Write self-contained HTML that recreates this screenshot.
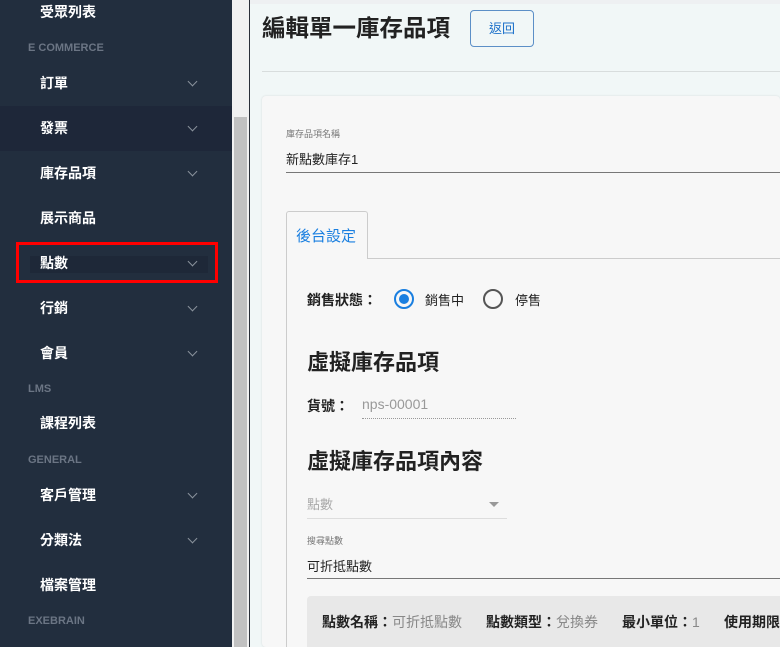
<!DOCTYPE html>
<html><head><meta charset="utf-8"><style>
*{margin:0;padding:0;box-sizing:border-box}
body{width:780px;height:647px;overflow:hidden;position:relative;background:#f1f7f7;font-family:"Liberation Sans","Noto Sans CJK TC",sans-serif}
.sb{position:absolute;left:0;top:0;width:232px;height:647px;background:#222e3e}
.it{position:absolute;left:40px;color:#fff;font-size:14px;font-weight:bold;line-height:20px}
.hd{position:absolute;left:28px;color:#6b7584;font-size:11px;font-weight:bold;line-height:14px}
.ch{position:absolute;left:189px;width:7px;height:7px;border-right:1.3px solid #8a929c;border-bottom:1.3px solid #8a929c;transform:rotate(45deg)}
.abs{position:absolute}
.bt{position:absolute;top:612px;font-size:14px;color:#222;white-space:nowrap}
.bt span{color:#888;font-weight:normal}
</style></head><body>
<div class="sb">
<div class="abs" style="left:0;top:106px;width:232px;height:45px;background:#1e2739"></div>
<div class="it" style="top:2px">受眾列表</div>
<div class="hd" style="top:41px">E COMMERCE</div>
<div class="it" style="top:73px">訂單</div><div class="ch" style="top:78px"></div>
<div class="it" style="top:118px">發票</div><div class="ch" style="top:123px"></div>
<div class="it" style="top:163px">庫存品項</div><div class="ch" style="top:168px"></div>
<div class="it" style="top:208px">展示商品</div>
<div class="abs" style="left:30px;top:256px;width:178px;height:17px;background:#1e2838"></div>
<div class="it" style="top:253px">點數</div><div class="ch" style="top:258px"></div>
<div class="abs" style="left:16px;top:242px;width:202px;height:41px;border:3px solid #f00"></div>
<div class="it" style="top:298px">行銷</div><div class="ch" style="top:303px"></div>
<div class="it" style="top:343px">會員</div><div class="ch" style="top:348px"></div>
<div class="hd" style="top:382px">LMS</div>
<div class="it" style="top:413px">課程列表</div>
<div class="hd" style="top:453px">GENERAL</div>
<div class="it" style="top:485px">客戶管理</div><div class="ch" style="top:490px"></div>
<div class="it" style="top:530px">分類法</div><div class="ch" style="top:535px"></div>
<div class="it" style="top:575px">檔案管理</div>
<div class="hd" style="top:614px">EXEBRAIN</div>
</div>
<div class="abs" style="left:232px;top:0;width:17px;height:647px;background:#f1f1f1"></div>
<div class="abs" style="left:234px;top:117px;width:13px;height:530px;background:#c1c1c1"></div>
<div class="abs" style="left:249px;top:0;width:1px;height:647px;background:#2a2f38"></div>
<div class="abs" style="left:250px;top:0;width:530px;height:4px;background:#eef0f2"></div>
<div class="abs" style="left:262px;top:12px;font-size:23.5px;font-weight:bold;color:#222;line-height:32px;white-space:nowrap">編輯單一庫存品項</div>
<div class="abs" style="left:470px;top:10px;width:64px;height:37px;border:1px solid #5c8fc7;border-radius:4px;color:#1a6fc9;font-size:13px;text-align:center;line-height:35px">返回</div>
<div class="abs" style="left:262px;top:71px;width:518px;height:1px;background:#d8dddd"></div>
<div class="abs" style="left:262px;top:96px;width:518px;height:551px;background:#f7f7f7;border-radius:4px;box-shadow:0 0 2px rgba(0,0,0,.12)"></div>
<div class="abs" style="left:286px;top:127px;font-size:9px;color:#777">庫存品項名稱</div>
<div class="abs" style="left:286px;top:149px;font-size:13px;color:#222">新點數庫存1</div>
<div class="abs" style="left:286px;top:172px;width:494px;height:1px;background:#777"></div>
<div class="abs" style="left:286px;top:211px;width:82px;height:48px;border:1px solid #ccc;border-bottom:none;background:#f7f7f7;border-radius:3px 3px 0 0;z-index:2"></div>
<div class="abs" style="left:296px;top:225px;font-size:15px;color:#1a7fe0;z-index:3">後台設定</div>
<div class="abs" style="left:367px;top:258px;width:413px;height:1px;background:#ccc"></div>
<div class="abs" style="left:286px;top:258px;width:1px;height:389px;background:#ccc"></div>
<div class="abs" style="left:307px;top:290px;font-size:14px;font-weight:bold;color:#222">銷售狀態：</div>
<div class="abs" style="left:394px;top:289px;width:20px;height:20px;border:2px solid #1a7fe0;border-radius:50%"></div>
<div class="abs" style="left:399px;top:294px;width:10px;height:10px;background:#1a7fe0;border-radius:50%"></div>
<div class="abs" style="left:425px;top:290px;font-size:13px;color:#222">銷售中</div>
<div class="abs" style="left:483px;top:289px;width:20px;height:20px;border:2px solid #555;border-radius:50%"></div>
<div class="abs" style="left:515px;top:290px;font-size:13px;color:#222">停售</div>
<div class="abs" style="left:307px;top:345px;font-size:22px;font-weight:bold;color:#222">虛擬庫存品項</div>
<div class="abs" style="left:307px;top:396px;font-size:14px;font-weight:bold;color:#222">貨號：</div>
<div class="abs" style="left:362px;top:396px;font-size:14px;color:#999">nps-00001</div>
<div class="abs" style="left:362px;top:418px;width:154px;border-top:1px dotted #999"></div>
<div class="abs" style="left:307px;top:444px;font-size:22px;font-weight:bold;color:#222">虛擬庫存品項內容</div>
<div class="abs" style="left:307px;top:494px;font-size:13px;color:#aaa">點數</div>
<div class="abs" style="left:489px;top:502px;border-left:5px solid transparent;border-right:5px solid transparent;border-top:5px solid #999"></div>
<div class="abs" style="left:307px;top:518px;width:200px;height:1px;background:#ddd"></div>
<div class="abs" style="left:307px;top:534px;font-size:9px;color:#777">搜尋點數</div>
<div class="abs" style="left:307px;top:556px;font-size:13px;color:#222">可折抵點數</div>
<div class="abs" style="left:307px;top:578px;width:473px;height:1px;background:#777"></div>
<div class="abs" style="left:307px;top:596px;width:473px;height:51px;background:#e8e8e8;border-radius:4px 0 0 0"></div>
<div class="bt" style="left:322px"><b>點數名稱：</b><span>可折抵點數</span></div>
<div class="bt" style="left:486px"><b>點數類型：</b><span>兌換券</span></div>
<div class="bt" style="left:622px"><b>最小單位：</b><span>1</span></div>
<div class="bt" style="left:724px"><b>使用期限</b></div>
</body></html>
